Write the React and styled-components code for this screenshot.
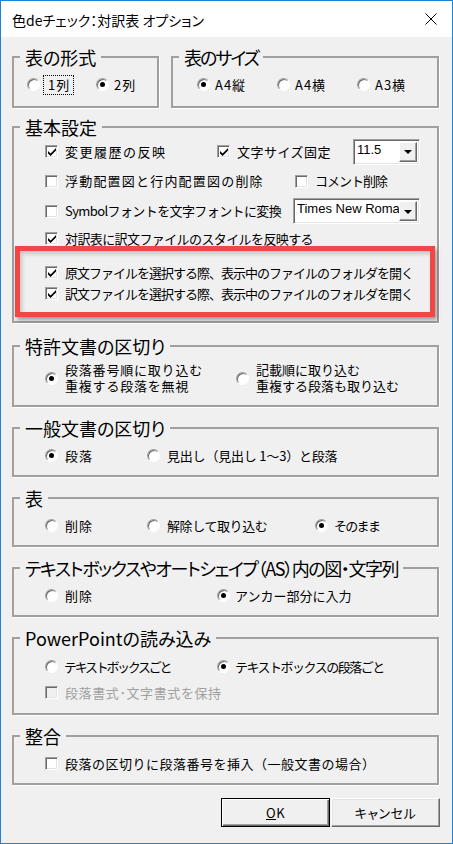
import React from 'react'
import styled, { createGlobalStyle } from 'styled-components'

const GlobalStyle = createGlobalStyle`
  html, body {
    margin: 0;
    padding: 0;
    background: #fff;
  }
  body {
    font-family: "Noto Sans CJK JP", "Noto Sans", sans-serif;
  }
`

// Window chrome
const Window = styled.div`
  box-sizing: border-box;
  width: 453px;
  height: 844px;
  border: 1px solid #1883d7;
  background: #f0f0f0;
  color: #000;
  display: flex;
  flex-direction: column;
  font-family: "Noto Sans CJK JP", "Noto Sans", sans-serif;
`
const TitleBar = styled.div`
  flex: none;
  height: 36px;
  background: #fff;
  display: flex;
  align-items: center;
  justify-content: space-between;
  padding: 0 15px 0 11px;
`
const TitleText = styled.span`
  font-size: 14px;
  padding-top: 2px;
  font-feature-settings: "palt";
`
const Body = styled.div`
  flex: 1;
  display: flex;
  flex-direction: column;
  padding: 19px 13px 0 11px;
`
const TopRow = styled.div`
  display: flex;
  gap: 12px;
`

// Group frames
const Frame = styled.div`
  position: relative;
  box-sizing: border-box;
  flex: ${p => (p.$grow ? '1 1 0' : p.$w ? `0 0 ${p.$w}px` : 'none')};
  height: ${p => p.$h}px;
  margin-top: ${p => p.$mt ?? 0}px;
  border: 2px solid #a0a0a0;
  box-shadow: 1px 1px 0 #fff;
  padding: ${p => p.$pt ?? 18}px 0 0 ${p => p.$pl ?? 31}px;
  display: flex;
  flex-direction: column;
  gap: ${p => p.$gap ?? 0}px;
`
const Legend = styled.span`
  position: absolute;
  top: -12px;
  left: 6px;
  padding: 0 5px;
  background: #f0f0f0;
  font-size: 18px;
  line-height: 22px;
  letter-spacing: ${p => p.$ls ?? 0}px;
  white-space: nowrap;
  font-feature-settings: "palt";
`
const Row = styled.div`
  display: flex;
  align-items: center;
  height: ${p => p.$h ?? 17}px;
`

// Options (check boxes, radio buttons)
const OptionLabel = styled.label`
  flex: ${p => (p.$w ? `0 0 ${p.$w}px` : '0 0 auto')};
  display: flex;
  align-items: center;
  gap: ${p => p.$gap ?? 7}px;
  font-size: 13px;
  line-height: 16px;
  letter-spacing: ${p => p.$ls ?? 1}px;
  white-space: nowrap;
  color: ${p => (p.$disabled ? '#a0a0a0' : '#000')};
`
const OptionText = styled.span`
  border: 0 dotted #000;
  border-width: ${p => (p.$focus ? '1px' : '0')};
  padding: ${p => (p.$focus ? '1px 3px 1px 4px' : '0')};
`
const RadioMark = styled.span`
  flex: none;
  box-sizing: border-box;
  width: 13px;
  height: 13px;
  border-radius: 50%;
  background: #fff;
  border: 1px solid;
  border-color: #a0a0a0 #fff #fff #a0a0a0;
  box-shadow: inset 1px 1px 0 #696969;
  display: flex;
  align-items: center;
  justify-content: center;

  &::after {
    content: '';
    width: 5px;
    height: 5px;
    border-radius: 50%;
    background: #000;
    display: ${p => (p.$on ? 'block' : 'none')};
  }
`
const CheckMark = styled.span`
  flex: none;
  box-sizing: border-box;
  width: 13px;
  height: 13px;
  background: ${p => (p.$disabled ? '#f0f0f0' : '#fff')};
  border: 1px solid;
  border-color: #a0a0a0 #fff #fff #a0a0a0;
  box-shadow: inset 1px 1px 0 #696969, inset -1px -1px 0 #e3e3e3;
  display: flex;
  align-items: center;
  justify-content: center;
`

const Tick = () => (
  <svg width="8" height="8" viewBox="0 0 8 8">
    <polygon points="0,3 2.6,5.4 8,0 8,2.6 2.6,8 0,5.6" fill="#000" />
  </svg>
)

const Choice = ({ radio, on, disabled, w, gap, ls, focus, children }) => (
  <OptionLabel $w={w} $gap={gap} $ls={ls} $disabled={disabled}>
    {radio ? (
      <RadioMark $on={on} />
    ) : (
      <CheckMark $disabled={disabled}>{on && <Tick />}</CheckMark>
    )}
    <OptionText $focus={focus}>{children}</OptionText>
  </OptionLabel>
)

// Combo box
const Combo = styled.div`
  flex: none;
  box-sizing: border-box;
  width: ${p => p.$w}px;
  height: 26px;
  border: 1px solid;
  border-color: #a0a0a0 #fff #fff #a0a0a0;
  box-shadow: inset 1px 1px 0 #696969, inset -1px -1px 0 #e3e3e3;
  background: #fff;
  display: flex;
  padding: 2px;
`
const ComboText = styled.span`
  flex: 1;
  overflow: hidden;
  white-space: nowrap;
  font-family: "Liberation Sans", Arial, sans-serif;
  font-size: 13px;
  line-height: 16px;
  padding-left: 1px;
`
const DropButton = styled.span`
  flex: none;
  box-sizing: border-box;
  width: 18px;
  background: #f0f0f0;
  border: 1px solid;
  border-color: #fff #696969 #696969 #fff;
  box-shadow: inset -1px -1px 0 #a0a0a0;
  display: flex;
  align-items: center;
  justify-content: center;

  &::after {
    content: '';
    border-left: 4px solid transparent;
    border-right: 4px solid transparent;
    border-top: 4px solid #000;
    margin-top: 1px;
  }
`

// Screenshot annotation
const Highlight = styled.div`
  position: relative;
  box-sizing: border-box;
  width: 420px;
  height: 71px;
  margin: -6px 0 0 -30px;
  border: 5px solid #f44545;
  padding: 11px 0 0 25px;
  box-shadow: 2px 3px 4px rgba(0, 0, 0, 0.35), inset 2px 3px 4px rgba(0, 0, 0, 0.18);
`

// Buttons
const ButtonBar = styled.div`
  display: flex;
  justify-content: flex-end;
  gap: 1px;
  margin: 13px -1px 0 0;
`
const Button = styled.button`
  box-sizing: border-box;
  width: 109px;
  height: 29px;
  padding: 0;
  font-family: "Noto Sans CJK JP", sans-serif;
  font-size: 13px;
  letter-spacing: 0.5px;
  color: #000;
  background: #f0f0f0;
  border: 1px solid;
  border-color: ${p => (p.$default ? '#000' : '#fff #696969 #696969 #fff')};
  box-shadow: ${p =>
    p.$default
      ? 'inset 1px 1px 0 #fff, inset -1px -1px 0 #696969, inset -2px -2px 0 #a0a0a0'
      : 'inset -1px -1px 0 #a0a0a0, inset 1px 1px 0 #e3e3e3'};
  font-feature-settings: "palt";
`
const Key = styled.span`
  text-decoration: underline;
`

const CloseIcon = () => (
  <svg width="12" height="12" viewBox="0 0 12 12">
    <path d="M0.5 0.5 L11.5 11.5 M11.5 0.5 L0.5 11.5" stroke="#000" strokeWidth="1" fill="none" />
  </svg>
)

const App = () => (
  <>
    <GlobalStyle />
    <Window>
      <TitleBar>
        <TitleText>色deチェック：対訳表 オプション</TitleText>
        <CloseIcon />
      </TitleBar>
      <Body>
        <TopRow>
          <Frame $w={147} $h={52} $pl={13}>
            <Legend>表の形式</Legend>
            <Row>
              <Choice radio w={69} gap={3} focus>1列</Choice>
              <Choice radio on gap={5}>2列</Choice>
            </Row>
          </Frame>
          <Frame $grow $h={52} $pl={24}>
            <Legend $ls={-2}>表のサイズ</Legend>
            <Row>
              <Choice radio on w={80} gap={5}>A4縦</Choice>
              <Choice radio w={80} gap={5}>A4横</Choice>
              <Choice radio gap={5}>A3横</Choice>
            </Row>
          </Frame>
        </TopRow>

        <Frame $h={197} $mt={18} $pt={10}>
          <Legend>基本設定</Legend>
          <Row $h={27}>
            <Choice on w={172} ls={1.5}>変更履歴の反映</Choice>
            <Choice on w={136} ls={0.5}>文字サイズ固定</Choice>
            <Combo $w={67}>
              <ComboText>11.5</ComboText>
              <DropButton />
            </Combo>
          </Row>
          <Row $h={32}>
            <Choice w={250} ls={1.2}>浮動配置図と行内配置図の削除</Choice>
            <Choice ls={-1}>コメント削除</Choice>
          </Row>
          <Row $h={28}>
            <Choice w={248} ls={-0.6}>Symbolフォントを文字フォントに変換</Choice>
            <Combo $w={127}>
              <ComboText>Times New Roma</ComboText>
              <DropButton />
            </Combo>
          </Row>
          <Row $h={27}>
            <Choice on ls={-0.6}>対訳表に訳文ファイルのスタイルを反映する</Choice>
          </Row>
          <Highlight>
            <Row $h={21}>
              <Choice on ls={-1}>原文ファイルを選択する際、表示中のファイルのフォルダを開く</Choice>
            </Row>
            <Row $h={21}>
              <Choice on ls={-1}>訳文ファイルを選択する際、表示中のファイルのフォルダを開く</Choice>
            </Row>
          </Highlight>
        </Frame>

        <Frame $h={62} $mt={22} $pt={15}>
          <Legend>特許文書の区切り</Legend>
          <Row $h={32}>
            <Choice radio on w={191} gap={7} ls={0.8}>
              段落番号順に取り込む<br />重複する段落を無視
            </Choice>
            <Choice radio gap={7} ls={0}>
              記載順に取り込む<br />重複する段落も取り込む
            </Choice>
          </Row>
        </Frame>

        <Frame $h={50} $mt={20}>
          <Legend>一般文書の区切り</Legend>
          <Row>
            <Choice radio on w={102} gap={7}>段落</Choice>
            <Choice radio gap={7} ls={-0.2}>見出し（見出し 1～3）と段落</Choice>
          </Row>
        </Frame>

        <Frame $h={50} $mt={20}>
          <Legend>表</Legend>
          <Row>
            <Choice radio w={102} gap={7}>削除</Choice>
            <Choice radio w={168} gap={7} ls={-0.4}>解除して取り込む</Choice>
            <Choice radio on gap={6} ls={-1.7}>そのまま</Choice>
          </Row>
        </Frame>

        <Frame $h={50} $mt={20}>
          <Legend $ls={-1.4}>テキストボックスやオートシェイプ（AS）内の図・文字列</Legend>
          <Row>
            <Choice radio w={172} gap={7}>削除</Choice>
            <Choice radio on gap={5} ls={0}>アンカー部分に入力</Choice>
          </Row>
        </Frame>

        <Frame $h={78} $mt={20} $pt={19} $gap={9}>
          <Legend>PowerPointの読み込み</Legend>
          <Row>
            <Choice radio w={172} gap={6} ls={-2.3}>テキストボックスごと</Choice>
            <Choice radio on gap={5} ls={-1.5}>テキストボックスの段落ごと</Choice>
          </Row>
          <Row>
            <Choice disabled ls={0.6}>段落書式･文字書式を保持</Choice>
          </Row>
        </Frame>

        <Frame $h={50} $mt={20}>
          <Legend>整合</Legend>
          <Row>
            <Choice ls={0.5}>段落の区切りに段落番号を挿入（一般文書の場合）</Choice>
          </Row>
        </Frame>

        <ButtonBar>
          <Button $default>
            <Key>O</Key>K
          </Button>
          <Button>キャンセル</Button>
        </ButtonBar>
      </Body>
    </Window>
  </>
)

export default App
